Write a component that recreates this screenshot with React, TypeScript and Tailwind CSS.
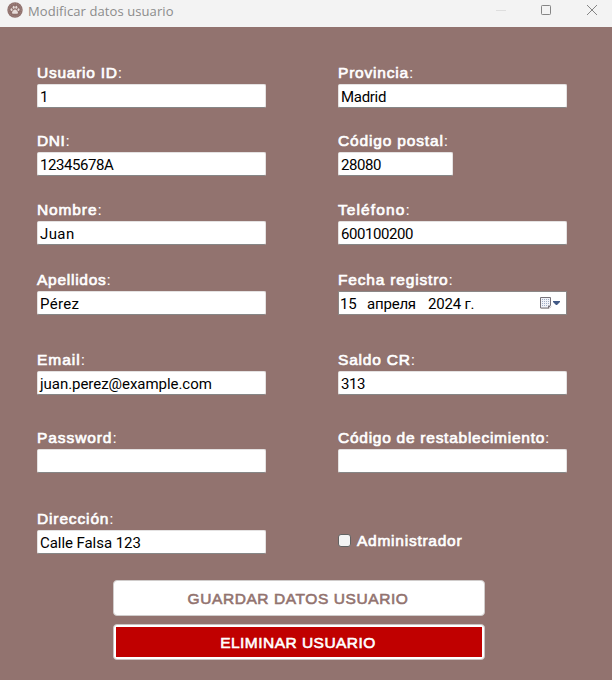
import React from 'react';

type FieldProps = {
  label: string;
  tracking: string;
  value?: string;
  valueTracking?: string;
  width?: string;
};

const LABEL =
  "font-['Liberation_Sans',Arial,sans-serif] text-[15.5px] leading-[19px] text-white whitespace-pre [-webkit-text-stroke:0.65px_currentColor]";
const VALUE = "font-[Roboto,sans-serif] text-[15px] text-black whitespace-pre";

function LabelText({ text, tracking }: { text: string; tracking: string }) {
  return (
    <div className={`${LABEL} h-[21px]`}>
      <span className={tracking}>{text}</span>
      <span className="[-webkit-text-stroke:0px]">:</span>
    </div>
  );
}

function Field({ label, tracking, value = '', valueTracking = '', width = 'w-[229px]' }: FieldProps) {
  return (
    <div>
      <LabelText text={label} tracking={tracking} />
      <div
        className={`${width} ${VALUE} h-6 rounded-[2px] border border-[#e4e2e2] border-b-[#868686] bg-white pl-[2px] leading-[25px]`}
      >
        <span className={valueTracking}>{value}</span>
      </div>
    </div>
  );
}

function CalendarIcon() {
  return (
    <svg width="21" height="14" viewBox="0 0 21 14">
      <path d="M.5 1.500h10v8l-2.500 2.500h-7.500z" fill="#f1f3f8" stroke="#77737a" />
      <path d="M1 12.500h8l2-2" fill="none" stroke="#aaa6a6" />
      <path d="M10.500 9.500h-2.500v2.500z" fill="#77737a" />
      <path d="M2 3.500h7M2 5.500h7M2 7.500h7M2 9.500h5" stroke="#a3afc6" strokeDasharray="1 1" />
      <path d="M13 5h7v1l-3 3h-1l-3-3z" fill="#425a86" />
    </svg>
  );
}

function DateField() {
  return (
    <div>
      <LabelText text="Fecha registro" tracking="tracking-[0.82px]" />
      <div
        className={`${VALUE} flex h-6 w-[229px] items-center border border-[#8b8786] bg-white pl-[1px] pr-[5px] leading-[22px] tracking-[-0.2px]`}
      >
        <span className="w-[27px] pt-[2px]">15</span>
        <span className="w-[61px] pt-[2px]">апреля</span>
        <span className="pt-[2px]">2024 г.</span>
        <span className="ml-auto">
          <CalendarIcon />
        </span>
      </div>
    </div>
  );
}

function PawLogo() {
  return (
    <svg width="16" height="16" viewBox="0 0 16 16">
      <circle cx="8" cy="8" r="7.700" fill="#8f706c" />
      <circle cx="8" cy="8" r="6.300" fill="none" stroke="#ad9692" strokeWidth=".7" strokeDasharray="1 1" />
      <g fill="#e6dbd8">
        <ellipse cx="4.500" cy="7.700" rx="1" ry="1.400" transform="rotate(-20 4.500 7.700)" />
        <ellipse cx="6.700" cy="5.200" rx="1" ry="1.500" />
        <ellipse cx="9.300" cy="5.200" rx="1" ry="1.500" />
        <ellipse cx="11.500" cy="7.700" rx="1" ry="1.400" transform="rotate(20 11.500 7.700)" />
        <path d="M8 7.500c1.300 0 3 2 3 3.300 0 1.200-1.300 1.200-3 .9-1.700.3-3 .3-3-.9 0-1.300 1.700-3.300 3-3.300z" />
      </g>
    </svg>
  );
}

function TitleBar() {
  return (
    <header className="flex h-[27px] items-start bg-[#f3f3f3]">
      <div className="ml-[7px] mt-[2px]">
        <PawLogo />
      </div>
      <div className="ml-[5px] mt-[1px] font-['Open_Sans','Noto_Sans',sans-serif] text-[13px] leading-5 tracking-[0.09px] text-[#8b8b8b]">
        Modificar datos usuario
      </div>
      <svg className="ml-auto mr-[14px] mt-[4px]" width="102" height="12" viewBox="0 0 102 12" fill="none">
        <path d="M0 6.500h10" stroke="#dedede" />
        <rect x="45.500" y="1.500" width="9" height="9" rx=".8" stroke="#858585" />
        <path d="M91 1l10 10M101 1l-10 10" stroke="#858585" />
      </svg>
    </header>
  );
}

export default function App() {
  return (
    <div className="flex h-[680px] w-[612px] flex-col overflow-hidden bg-[#92736f]">
      <TitleBar />
      <main className="pl-[37px] pt-[36px]">
        <div className="grid grid-cols-[301px_229px] grid-rows-[68px_69px_70px_80px_78px_81px_45px]">
          <Field label="Usuario ID" tracking="tracking-[0.75px]" value="1" />
          <Field label="Provincia" tracking="tracking-[0.8px]" value="Madrid" valueTracking="tracking-[-0.3px]" />
          <Field label="DNI" tracking="tracking-[0.6px]" value="12345678A" valueTracking="tracking-[-0.42px]" />
          <Field label="Código postal" tracking="tracking-[0.84px]" value="28080" valueTracking="tracking-[-0.42px]" width="w-[115px]" />
          <Field label="Nombre" tracking="tracking-[0.88px]" value="Juan" valueTracking="tracking-[0.4px]" />
          <Field label="Teléfono" tracking="tracking-[1.1px]" value="600100200" valueTracking="tracking-[-0.42px]" />
          <Field label="Apellidos" tracking="tracking-[0.74px]" value="Pérez" valueTracking="tracking-[0.35px]" />
          <DateField />
          <Field label="Email" tracking="tracking-[1px]" value="juan.perez@example.com" valueTracking="tracking-[-0.04px]" />
          <Field label="Saldo CR" tracking="tracking-[0.8px]" value="313" valueTracking="tracking-[-0.4px]" />
          <Field label="Password" tracking="tracking-[0.92px]" />
          <Field label="Código de restablecimiento" tracking="tracking-[0.74px]" />
          <Field label="Dirección" tracking="tracking-[0.86px]" value="Calle Falsa 123" valueTracking="tracking-[-0.06px]" />
          <label className="mt-[22px] flex h-[21px] items-center gap-[6px] self-start">
            <span className="-mt-[3px] h-[13px] w-[13px] rounded-[3px] border border-[#626262] bg-[#f3f3f3]" />
            <span className={`${LABEL} -mt-[3px] tracking-[0.75px]`}>Administrador</span>
          </label>
        </div>
        <div className="ml-[76px] mt-[26px] flex w-[372px] flex-col gap-2">
          <button className="flex h-9 items-center justify-center rounded-[4px] border border-[#d0cccb] bg-white pr-[2px] pt-[2px]">
            <span className="font-['Liberation_Sans',Arial,sans-serif] text-[15.5px] leading-5 tracking-[0.58px] text-[#92736f] [-webkit-text-stroke:0.6px_currentColor]">
              GUARDAR DATOS USUARIO
            </span>
          </button>
          <button className="h-9 rounded-[4px] border border-[#c9c5c4] bg-white p-[2px]">
            <span className="flex h-full items-center justify-center bg-[#c00000] pr-[2px] pt-[2px] font-['Liberation_Sans',Arial,sans-serif] text-[15.5px] leading-5 tracking-[0.47px] text-white [-webkit-text-stroke:0.6px_currentColor]">
              ELIMINAR USUARIO
            </span>
          </button>
        </div>
      </main>
    </div>
  );
}
